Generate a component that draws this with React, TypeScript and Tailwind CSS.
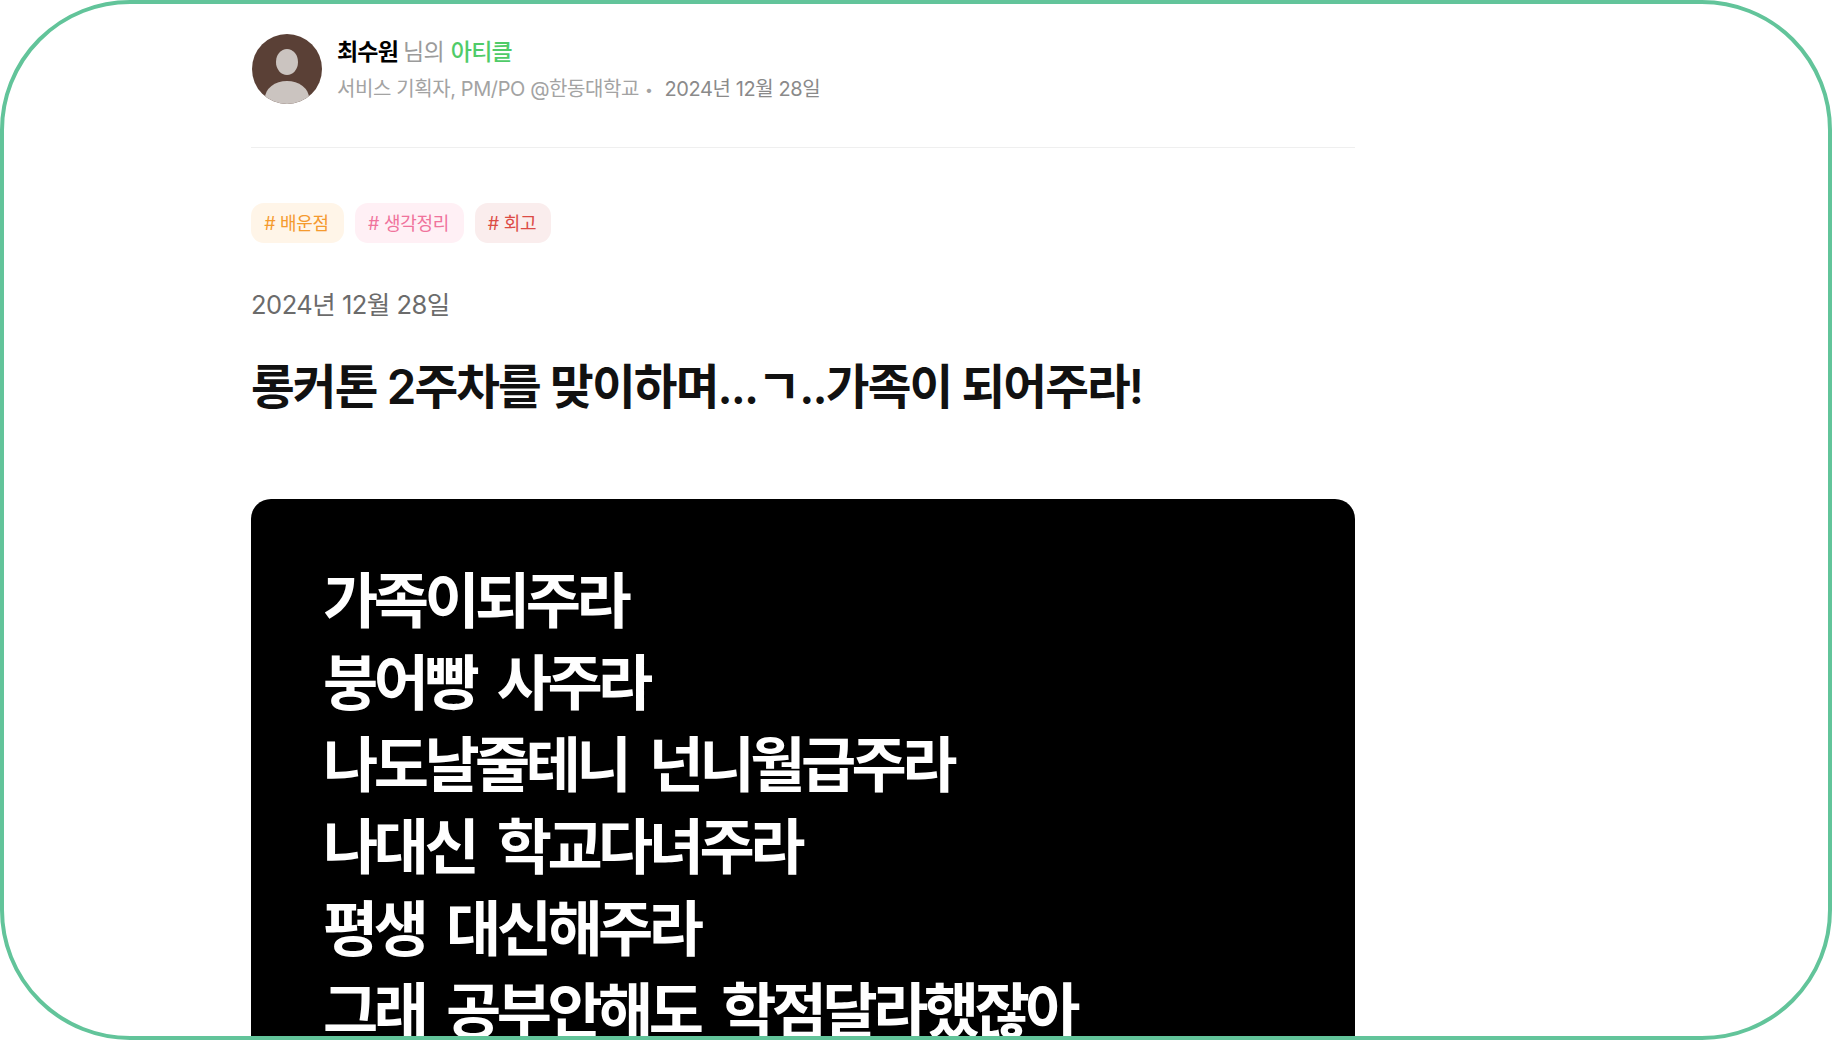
export default function App() {
  const font = { fontFamily: '"Inter","Noto Sans CJK KR",sans-serif' };
  const lines = ["가족이되주라", "붕어빵 사주라", "나도날줄테니 넌니월급주라", "나대신 학교다녀주라", "평생 대신해주라", "그래 공부안해도 학점달라했잖아"];
  return (
    <div style={font} className="relative h-[1040px] w-[1832px] overflow-hidden bg-white">
      <div className="flex h-[1040px] flex-col pl-[251px]">
        <div className="w-[1104px]">
          <div className="flex h-[148px] items-start border-b border-[#efefef] pt-[34px]">
            <svg className="ml-[1px] h-[70px] w-[70px] shrink-0" viewBox="0 0 70 70">
              <defs><clipPath id="c"><circle cx="35" cy="35" r="35" /></clipPath></defs>
              <g clipPath="url(#c)">
                <rect width="70" height="70" fill="#5a4036" />
                <ellipse cx="35" cy="28" rx="11" ry="13" fill="#cbc4c0" />
                <ellipse cx="35" cy="64" rx="22" ry="17" fill="#cbc4c0" />
              </g>
            </svg>
            <div className="ml-[15px] flex flex-col">
              <div className="flex h-[37px] items-center text-[23px] tracking-[-0.8px]">
                <span className="font-semibold text-black">최수원</span>
                <span className="ml-[5px] text-[#9b9b9b]">님의</span>
                <span className="ml-[7px] font-medium text-[#4fcb68]">아티클</span>
              </div>
              <div className="flex h-[36px] items-center text-[20px] tracking-[-0.4px] text-[#a3a3a3]">
                <span>서비스 기획자, PM/PO @한동대학교</span>
                <span className="ml-[6px] text-[14px]">•</span>
                <span className="ml-[12px] text-[#8a8a8a]">2024년 12월 28일</span>
              </div>
            </div>
          </div>
          <div className="mt-[55px] flex gap-[11px] text-[18px] tracking-[-0.3px]">
            <span className="flex h-[40px] w-[93px] items-center justify-center rounded-[13px] bg-[#fff5e8] pr-[2px] text-[#f59a2e]"># 배운점</span>
            <span className="flex h-[40px] w-[109px] items-center justify-center rounded-[13px] bg-[#fff0f5] pr-[2px] text-[#f0739c]"># 생각정리</span>
            <span className="flex h-[40px] w-[76px] items-center justify-center rounded-[13px] bg-[#faeded] pr-[2px] text-[#dc4b45]"># 회고</span>
          </div>
          <div className="mt-[44px] flex h-[36px] items-center text-[25.5px] tracking-[-0.5px] text-[#6b6b6b]">2024년 12월 28일</div>
          <h1 className="mt-[34px] flex h-[60px] items-center text-[47.5px] font-semibold tracking-[-1.85px] whitespace-nowrap text-[#111111]">롱커톤 2주차를 맞이하며...ㄱ..가족이 되어주라!</h1>
          <div className="mt-[82px] h-[800px] rounded-t-[20px] bg-black pl-[72px] pt-[61px] text-[60px] font-semibold text-white">
            {lines.map((l) => (
              <div key={l} className="flex h-[82px] items-center tracking-[-4.5px] [word-spacing:11px] whitespace-nowrap">{l}</div>
            ))}
          </div>
        </div>
      </div>
      <div className="pointer-events-none absolute inset-0 rounded-[130px] border-4 border-[#62c49a]" />
    </div>
  );
}
